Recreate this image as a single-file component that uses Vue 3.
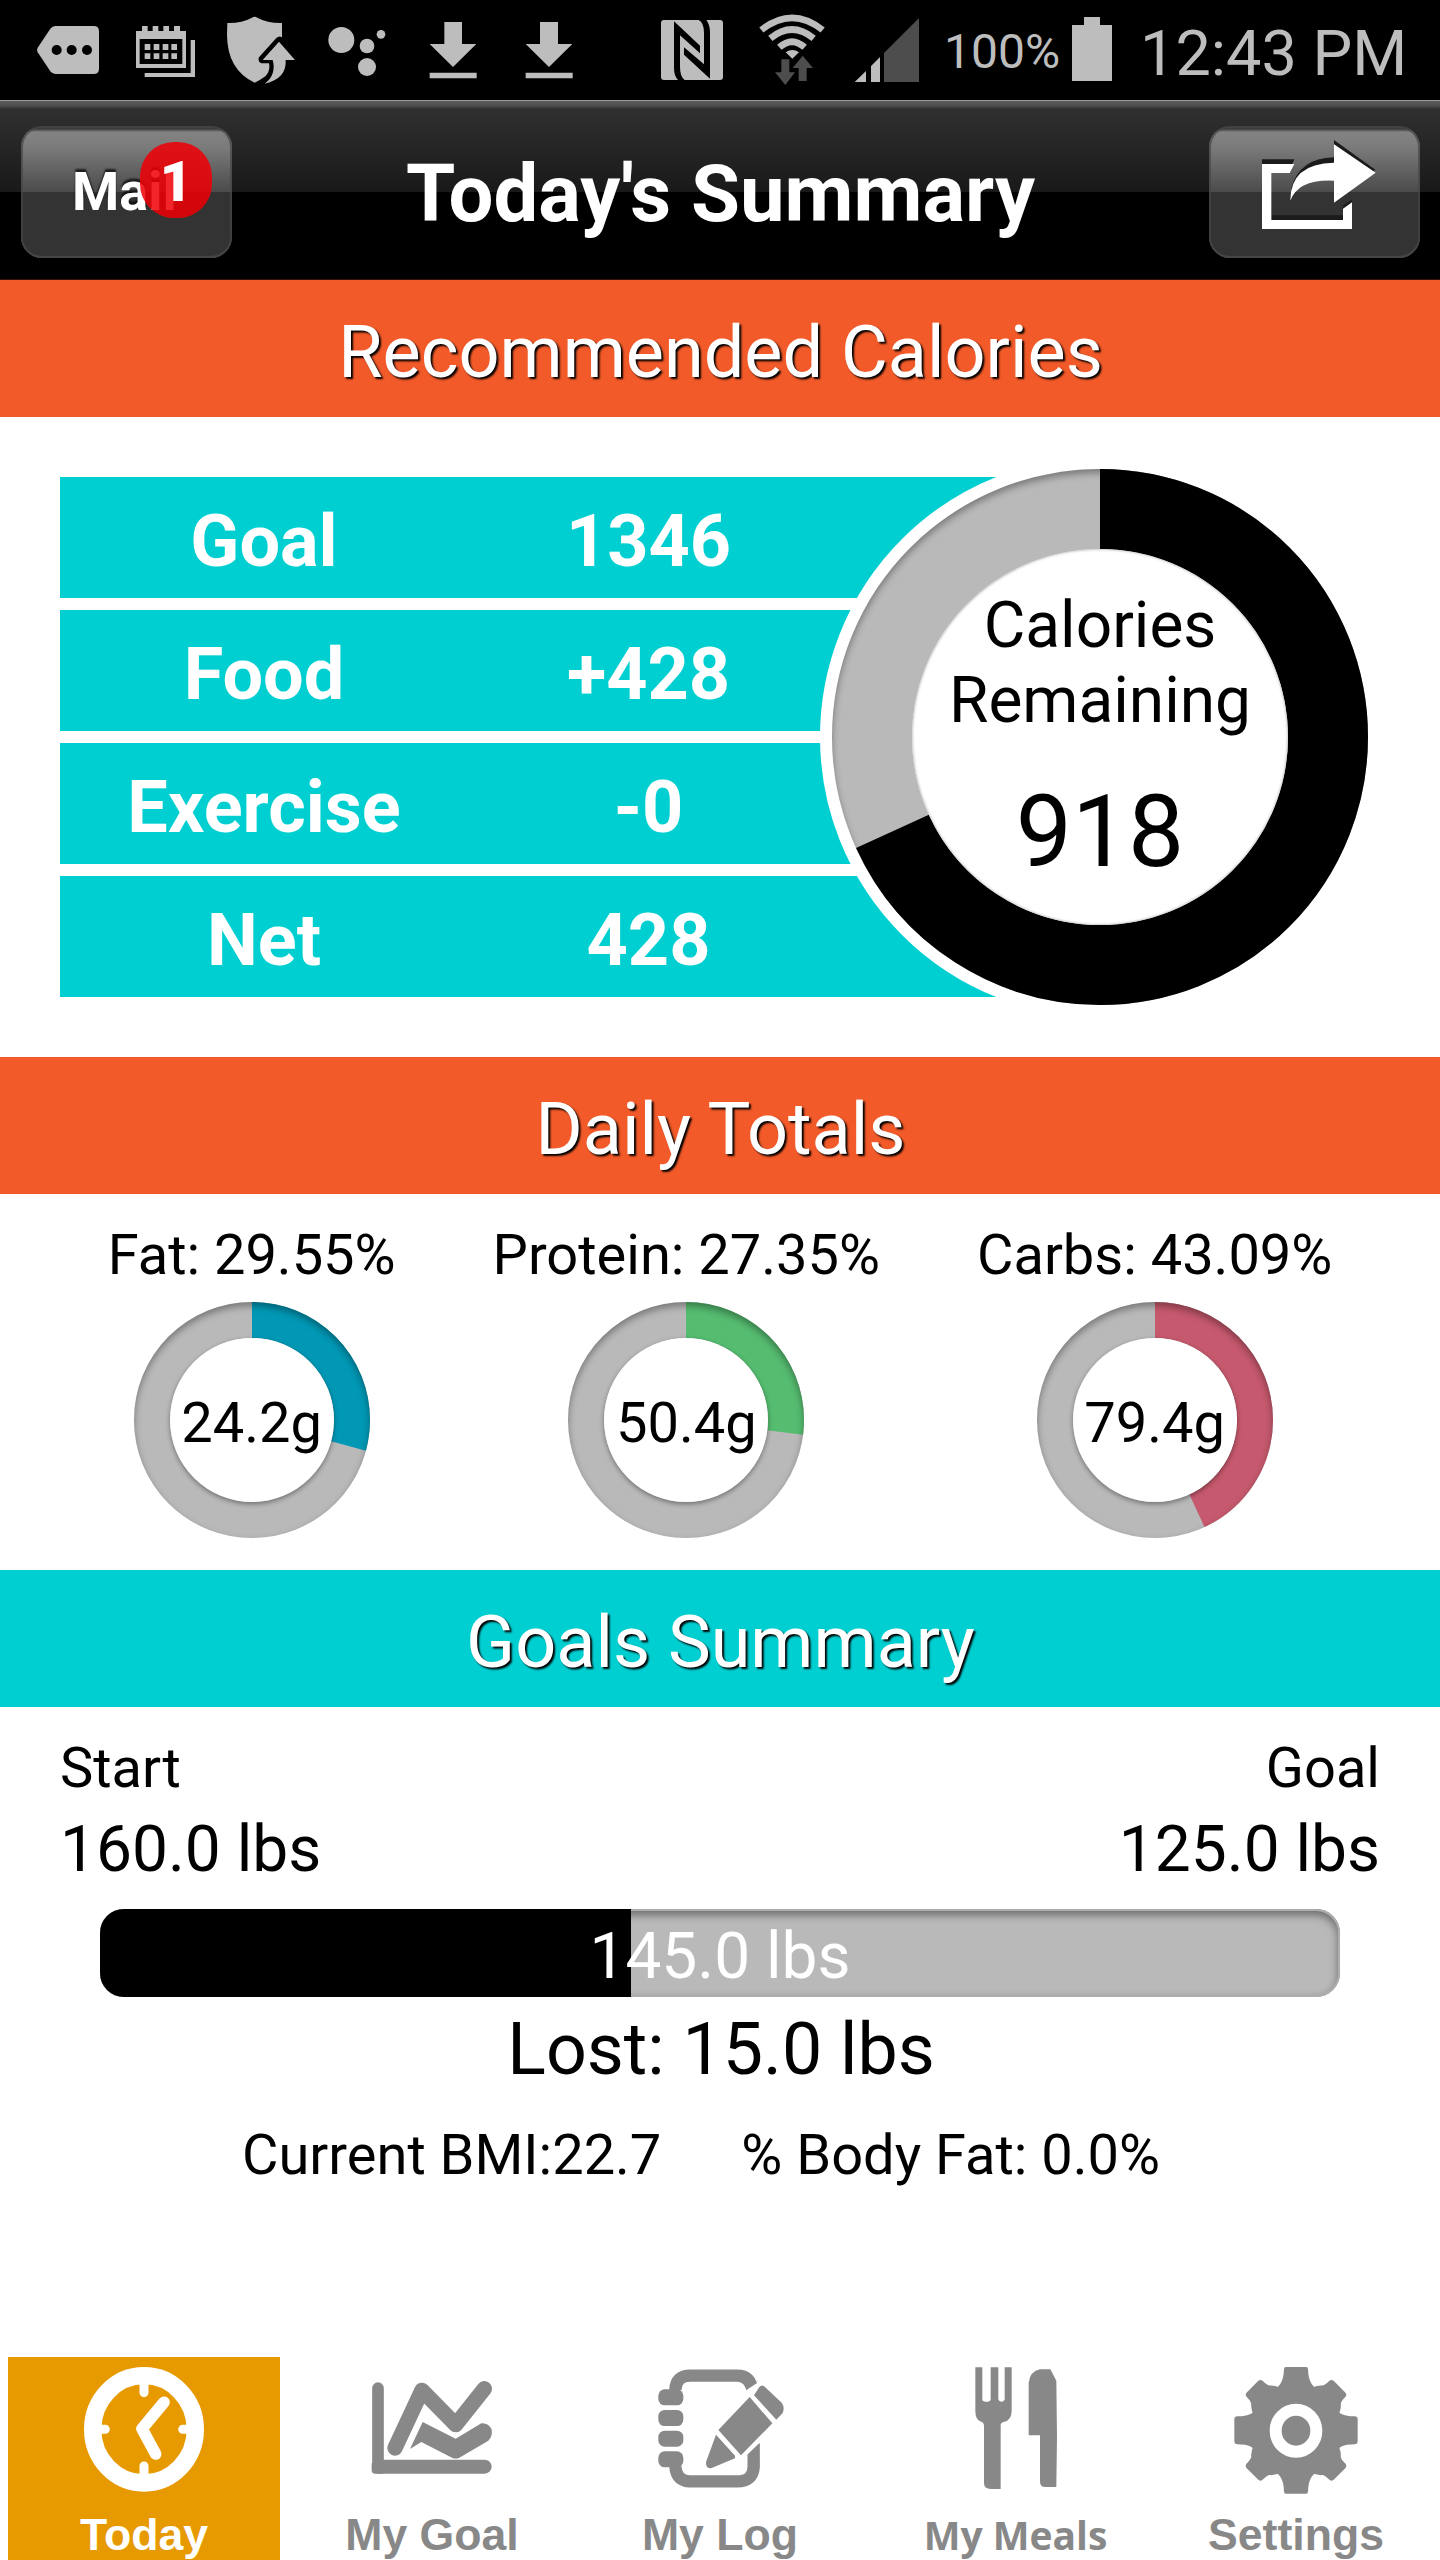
<script setup>
const rows = [
  { label: 'Goal', value: '1346' },
  { label: 'Food', value: '+428' },
  { label: 'Exercise', value: '-0' },
  { label: 'Net', value: '428' },
]

const macros = [
  { label: 'Fat: 29.55%', grams: '24.2g', share: 29.2, color: '#0098b5' },
  { label: 'Protein: 27.35%', grams: '50.4g', share: 27, color: '#55bc70' },
  { label: 'Carbs: 43.09%', grams: '79.4g', share: 43.09, color: '#c6596d' },
]

const remainingShare = (918 / 1346) * 100
const lostShare = (15 / 35) * 100
</script>

<template>
  <div class="screen">
    <div class="status">
      <svg width="117" height="100" viewBox="0 0 351 300">
        <path fill="#bdbdbd" d="M166 78H281Q297 78 297 94V206Q297 222 281 222H166Q157 222 151 214L113 157Q109 150 113 143L151 86Q157 78 166 78Z" />
        <g fill="#000"><circle cx="170" cy="150" r="15" /><circle cx="215" cy="150" r="15" /><circle cx="261" cy="150" r="15" /></g>
      </svg>
      <svg width="94" height="100" viewBox="351 0 282 300" fill="#bdbdbd">
        <path fill-rule="evenodd" d="M408 93H426V78H443V93H458V78H475V93H490V78H507V93H522V78H540V93H558V204H408ZM419 117V192H547V117Z" />
        <path d="M434 132h17v18h-17zM461 132h17v18h-17zM488 132h17v18h-17zM514 132h17v18h-17zM434 160h17v17h-17zM461 160h17v17h-17zM488 160h17v17h-17zM514 160h17v17h-17z" />
        <path d="M572 120H585V231H434V219H572Z" />
      </svg>
      <svg width="100" height="100" viewBox="633 0 300 300">
        <path fill="#bdbdbd" d="M682 69Q725 70 756 53Q764 48 772 53Q803 70 846 69V112Q838 106 829 114L777 172Q772 184 784 190H807Q812 212 796 229Q780 241 764 248Q682 210 681 105Z" />
        <path fill="#bdbdbd" d="M837 125L885 180H857Q861 236 794 251Q830 225 818 180H788Z" />
      </svg>
      <svg width="97" height="100" viewBox="933 0 291 300" fill="#bdbdbd">
        <circle cx="1024" cy="120" r="39" /><circle cx="1101" cy="138" r="22" /><circle cx="1143" cy="103" r="13" /><circle cx="1101" cy="201" r="27" />
      </svg>
      <svg width="92" height="100" viewBox="1224 0 276 300" fill="#bdbdbd">
        <path d="M1333 66H1386V132H1429L1359 201L1289 132H1333ZM1289 218H1430V235H1289Z" />
      </svg>
      <svg width="120" height="100" viewBox="60 0 360 300" fill="#bdbdbd">
        <path d="M180 66H234V132H277L207 201L137 132H180ZM137 218H278V235H137Z" />
      </svg>
      <svg width="120" height="100" viewBox="420 0 360 300">
        <rect x="543" y="60" width="186" height="180" rx="9" fill="#bdbdbd" />
        <path d="M582 64L660 137V160L600 106V200Q600 230 614 240H594Q582 228 582 205Z" />
        <path d="M690 236L612 164V142L672 193V98Q672 68 656 60H679Q690 74 690 96Z" />
      </svg>
      <svg width="100" height="100" viewBox="780 0 300 300">
        <g fill="none" stroke="#bdbdbd" stroke-width="20">
          <path d="M844 90Q936 17 1028 90" /><path d="M871 115Q936 62 1001 115" /><path d="M898 142Q936 108 974 142" />
        </g>
        <path fill="#bdbdbd" d="M917 157Q937 143 957 157L937 176Z" />
        <path fill="#4d4d4d" d="M904 178H928V217H945L916 255L885 217H904ZM968 167L999 204H980V243H956V204H938Z" />
      </svg>
      <svg width="90" height="100" viewBox="1080 0 270 300">
        <path fill="#bdbdbd" d="M1124 246L1158 213V246ZM1173 198L1200 171V246H1173Z" />
        <path fill="#4d4d4d" d="M1212 159L1317 54V246H1212Z" />
      </svg>
      <span class="percent">100%</span>
      <svg width="40" height="100" viewBox="336 0 120 300" fill="#bdbdbd">
        <path d="M372 51H420V75H456V243H336V75H372Z" />
      </svg>
      <span class="time">12:43 PM</span>
    </div>

    <header class="header">
      <div class="button mail">
        <span>Mail</span>
        <b class="badge">1</b>
      </div>
      <h1>Today's Summary</h1>
      <div class="button">
        <svg width="211" height="132" viewBox="747 378 633 396">
          <path fill="#1b1b1b" d="M906 478H1003L990 508H906ZM935 646H1149V662H935ZM1122 420L1247 510L1230 516L1122 444ZM994 565Q1018 474 1122 472V492Q1030 490 996 570ZM1150 616L1176 599V615L1150 633Z" />
          <path fill="#fff" d="M906 492H1003L989 519H934V660H1149V626L1176 607V687H906Z" />
          <path fill="#fff" d="M1122 433L1247 518L1122 608V542Q1015 537 991 602Q991 490 1122 488Z" />
        </svg>
      </div>
    </header>

    <h2 class="band">Recommended Calories</h2>
    <section class="calories">
      <div class="rows">
        <div v-for="row in rows" :key="row.label" class="row">
          <span class="label">{{ row.label }}</span>
          <span class="value">{{ row.value }}</span>
        </div>
      </div>
      <div class="donut big">
        <svg class="layer" viewBox="0 0 536 536">
          <circle class="track" cx="268" cy="268" r="228" stroke-width="80" />
          <circle class="arc" cx="268" cy="268" r="228" stroke-width="80" stroke="#000" pathLength="100" :stroke-dasharray="`${remainingShare} 100`" />
        </svg>
        <div class="layer shade"></div>
        <div class="hole">
          <div class="caption">Calories<br>Remaining</div>
          <div class="remaining">918</div>
        </div>
      </div>
    </section>

    <h2 class="band">Daily Totals</h2>
    <section class="totals">
      <div v-for="m in macros" :key="m.label" class="macro">
        <div class="macro-label">{{ m.label }}</div>
        <div class="donut small">
          <svg class="layer" viewBox="0 0 236 236">
            <circle class="track" cx="118" cy="118" r="100" stroke-width="36" />
            <circle class="arc" cx="118" cy="118" r="100" stroke-width="36" :stroke="m.color" pathLength="100" :stroke-dasharray="`${m.share} 100`" />
          </svg>
          <div class="layer shade"></div>
          <div class="hole">{{ m.grams }}</div>
        </div>
      </div>
    </section>

    <h2 class="band teal">Goals Summary</h2>
    <section class="goals">
      <div class="ends"><span>Start</span><span>Goal</span></div>
      <div class="weights"><span>160.0 lbs</span><span>125.0 lbs</span></div>
      <div class="bar">
        <div class="fill" :style="{ width: lostShare + '%' }"></div>
        <div class="current">145.0 lbs</div>
      </div>
      <div class="lost">Lost: 15.0 lbs</div>
      <div class="stats"><span>Current BMI:22.7</span><span>% Body Fat: 0.0%</span></div>
    </section>

    <nav class="tabs">
      <div class="tab active">
        <svg viewBox="24 51 816 420">
          <ellipse cx="432" cy="268" rx="154" ry="161" fill="none" stroke="#fff" stroke-width="52" />
          <g stroke="#fff" fill="none" stroke-linecap="round" stroke-linejoin="round">
            <path stroke-width="27" d="M432 130V158M432 378V405M290 268H316M548 268H575" />
            <path stroke-width="35" d="M492 187L426 266L467 342" />
          </g>
        </svg>
        <span>Today</span>
      </div>
      <div class="tab">
        <svg viewBox="888 51 816 420">
          <g stroke="#888" fill="none" stroke-linecap="round" stroke-linejoin="round">
            <path stroke-width="35" d="M1134 144V383" />
            <path stroke-width="42" d="M1137 380H1454" />
            <path stroke-width="46" d="M1185 324L1266 151L1367 254L1453 146" />
          </g>
          <path fill="#888" d="M1115 370H1150V401H1125Q1115 401 1115 390Z" />
          <path fill="#888" d="M1268 246L1367 296L1444 250Q1465 248 1475 268Q1478 290 1465 302L1378 353Q1367 358 1356 353L1264 306L1230 327Z" />
        </svg>
        <span>My Goal</span>
      </div>
      <div class="tab">
        <svg viewBox="312 51 816 420" fill="#888">
          <path fill="none" stroke="#888" stroke-width="37" d="M586 150Q588 107 630 107H772Q812 107 818 155M821 310V382Q818 424 772 424H630Q590 424 586 380" />
          <path fill="#fff" d="M795 153L845 120L930 235L835 312L780 365L690 400L665 370L700 265Z" />
          <rect x="535" y="148" width="75" height="48" rx="19" /><rect x="535" y="210" width="75" height="48" rx="19" /><rect x="535" y="272" width="75" height="48" rx="19" /><rect x="535" y="334" width="75" height="48" rx="19" />
          <path d="M809 171L877 250L783 346L715 270ZM822 166L838 141Q846 132 855 141L905 188Q915 202 908 219L889 239ZM708 284L765 347V355L695 384Q677 388 678 366Z" />
        </svg>
        <span>My Log</span>
      </div>
      <div class="tab meals">
        <svg viewBox="-264 51 816 420" fill="#888">
          <path d="M46 82H67V180Q69 186 80 185Q91 186 92 178V82H115V178Q117 186 125 185Q133 185 134 178V82H155V214Q154 242 133 245Q122 247 122 256V447H93Q72 447 72 430V258Q72 247 63 245Q46 240 46 212Z" />
          <path d="M240 88H271L289 122L291 290L289 441H256Q240 441 240 425V286H206V128Q210 94 240 88Z" />
        </svg>
        <span>My Meals</span>
      </div>
      <div class="tab">
        <svg viewBox="600 51 816 420" fill="#888">
          <circle cx="1008" cy="271" r="139" />
          <g transform="translate(1008 271)">
            <path v-for="a in [0, 180]" :key="a" :transform="`rotate(${a})`" d="M-72 -122Q-37 -130 -36 -184Q-36 -190 -30 -190H30Q36 -190 36 -184Q37 -130 72 -122Z" />
            <path v-for="a in [90, 270]" :key="a" :transform="`rotate(${a})`" d="M-70 -118Q-42 -126 -42 -176Q-42 -185 -33 -185H33Q42 -185 42 -176Q42 -126 70 -118Z" />
            <path v-for="a in [45, 135, 225, 315]" :key="a" :transform="`rotate(${a})`" d="M-58 -120Q-52 -140 -40 -150Q-34 -155 -34 -176Q-33 -185 -23 -185H23Q33 -185 34 -176Q34 -155 40 -150Q52 -140 58 -120Z" />
          </g>
          <ellipse cx="1008" cy="272" rx="61" ry="63" stroke="#fff" stroke-width="36" />
        </svg>
        <span>Settings</span>
      </div>
    </nav>
  </div>
</template>

<style>
body {
  margin: 0;
  background: #fff;
}
</style>

<style scoped>
.screen {
  width: 1440px;
  height: 2560px;
  overflow: hidden;
  display: flex;
  flex-direction: column;
  background: #fff;
  color: #000;
  font-family: Roboto, sans-serif;
}
.screen * {
  box-sizing: border-box;
}
svg {
  display: block;
  flex: none;
}
.status {
  height: 100px;
  flex: none;
  display: flex;
  align-items: center;
  background: #000;
  color: #bdbdbd;
  white-space: nowrap;
}
.percent {
  width: 142px;
  padding: 3px 0 0 14px;
  font-size: 48px;
}
.time {
  padding: 6px 0 0 28px;
  font-size: 63px;
}
.header {
  height: 180px;
  flex: none;
  display: flex;
  align-items: flex-start;
  justify-content: space-between;
  padding: 26px 20px 0 21px;
  background: linear-gradient(#9a9a9a 0, #9a9a9a 1px, #5c5c5c 1px, #4c4c4c 6px, #303030 9px, #191919 92px, #000 92px, #000 179px, #3a0c05 179px);
}
.header h1 {
  margin: 0;
  padding-top: 18px;
  font-size: 79.6px;
  line-height: 100px;
  font-weight: 700;
  color: #fff;
}
.button {
  width: 211px;
  height: 132px;
  border-radius: 21px;
  background: linear-gradient(#3a3a3a 0, #3c3c3c 3px, #828282 6px, #7c7c7c 20px, #4b4b4b 66px, #333 66px, #333 100%);
  box-shadow: inset 0 0 0 2px rgba(70, 70, 70, 0.7), inset 0 -2px 1px #484848;
}
.mail {
  position: relative;
  padding: 34px 0 0 51px;
  font-size: 54px;
  line-height: 64px;
  font-weight: 700;
  color: #fff;
  text-shadow: 0 -3px 2px rgba(0, 0, 0, 0.7);
}
.badge {
  position: absolute;
  left: 119px;
  top: 16px;
  width: 72px;
  height: 76px;
  border-radius: 34px;
  background: rgba(240, 0, 5, 0.85);
  font-size: 56px;
  line-height: 81px;
  text-align: center;
  text-shadow: none;
}
.band {
  height: 137px;
  flex: none;
  margin: 0;
  padding: 8px 0 0 1px;
  background: #f25a29;
  color: #fff;
  font-size: 72px;
  line-height: 129px;
  font-weight: 400;
  text-align: center;
  text-shadow: 2px 2px 2px #000;
}
.teal {
  background: #00cfd2;
}
.calories {
  height: 640px;
  flex: none;
  display: grid;
  padding: 40px 60px;
  align-items: center;
}
.rows {
  grid-area: 1 / 1;
  width: 1040px;
  display: flex;
  flex-direction: column;
  gap: 12px;
}
.row {
  height: 121px;
  display: flex;
  padding-top: 8px;
  background: #00cfd2;
  color: #fff;
  font-size: 72px;
  line-height: 113px;
  font-weight: 700;
  text-align: center;
}
.label {
  width: 408px;
}
.value {
  width: 361px;
}
.donut {
  display: grid;
  place-items: center;
  border-radius: 50%;
}
.donut > * {
  grid-area: 1 / 1;
}
.layer {
  width: 100%;
  height: 100%;
}
.track,
.arc {
  fill: none;
}
.track {
  stroke: #b9b9b9;
}
.arc {
  transform: rotate(-90deg);
  transform-origin: center;
}
.shade {
  border-radius: 50%;
  box-shadow: inset 0 4px 7px rgba(0, 0, 0, 0.35);
}
.hole {
  border-radius: 50%;
  background: #fff;
  box-shadow: 0 2px 5px rgba(0, 0, 0, 0.4);
  text-align: center;
}
.big {
  grid-area: 1 / 1;
  justify-self: end;
  width: 560px;
  height: 560px;
  border: 12px solid #fff;
  background: #fff;
}
.big .hole {
  width: 376px;
  height: 376px;
  padding-top: 39px;
  box-shadow: inset 0 0 3px rgba(0, 0, 0, 0.4);
}
.caption {
  font-size: 64px;
  line-height: 75px;
}
.remaining {
  margin-top: 44px;
  font-size: 100px;
  line-height: 100px;
}
.totals {
  height: 376px;
  flex: none;
  display: flex;
  justify-content: center;
  gap: 97px;
  padding-top: 28px;
}
.macro {
  display: flex;
  flex-direction: column;
  align-items: center;
  gap: 14px;
  font-size: 56px;
}
.macro-label {
  line-height: 66px;
}
.small {
  width: 236px;
  height: 236px;
}
.small .hole {
  width: 164px;
  height: 164px;
  padding-top: 6px;
  line-height: 158px;
}
.goals {
  flex: 1;
  padding: 25px 60px 0;
}
.ends,
.weights {
  display: flex;
  justify-content: space-between;
}
.ends {
  font-size: 56px;
  line-height: 72px;
}
.weights {
  margin-top: 8px;
  font-size: 64px;
  line-height: 76px;
}
.bar {
  display: grid;
  height: 88px;
  margin: 21px 40px 0;
  border-radius: 24px;
  overflow: hidden;
  background: #b9b9b9;
  box-shadow: inset 0 0 0 2px #adadad, inset 0 4px 9px 2px rgba(0, 0, 0, 0.42);
}
.fill {
  grid-area: 1 / 1;
  background: #000;
}
.current {
  grid-area: 1 / 1;
  padding-top: 8px;
  color: #fff;
  font-size: 64px;
  line-height: 80px;
  text-align: center;
}
.lost {
  margin-top: 13px;
  padding-left: 2px;
  font-size: 71.7px;
  line-height: 80px;
  text-align: center;
}
.stats {
  display: flex;
  gap: 80px;
  margin-top: 30px;
  padding-left: 182px;
  font-size: 56px;
  line-height: 70px;
}
.tabs {
  height: 203px;
  flex: none;
  display: flex;
  gap: 16px;
  padding: 0 8px;
}
.tab {
  width: 272px;
  height: 203px;
  display: flex;
  flex-direction: column;
  align-items: center;
  gap: 13px;
  color: #888;
  font: 700 44.6px/50px "Liberation Sans", sans-serif;
  white-space: nowrap;
}
.tab svg {
  width: 272px;
  height: 140px;
}
.active {
  background: #e69a00;
  color: #fff;
}
.meals span {
  padding-left: 15px;
  font: 700 39px/50px "Open Sans", sans-serif;
}
</style>
